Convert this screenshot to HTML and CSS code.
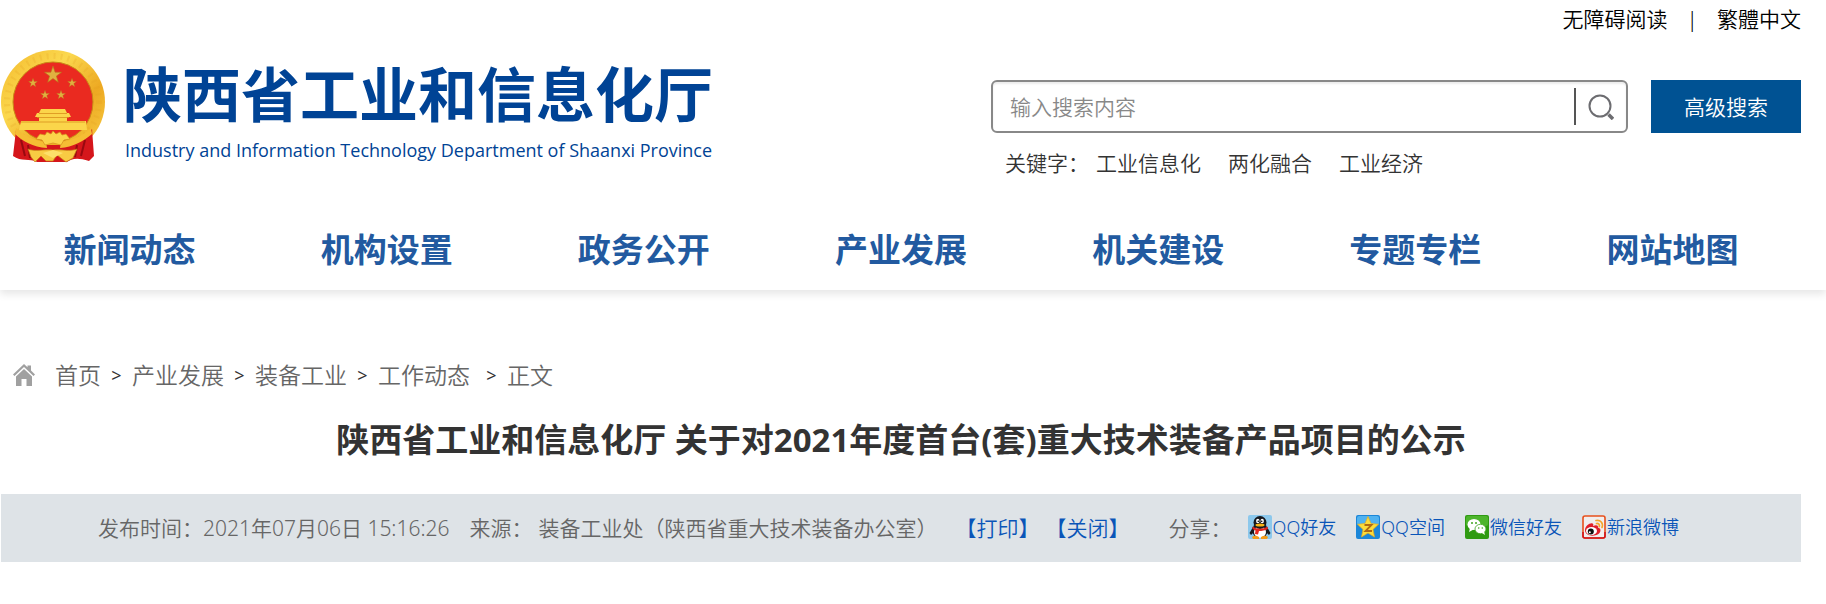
FILE: index.html
```html
<!DOCTYPE html>
<html lang="zh-CN">
<head>
  <meta charset="UTF-8">
  <meta name="viewport" content="width=device-width, initial-scale=1.0">
  <title>陕西省工业和信息化厅</title>
  <link rel="stylesheet" href="styles.css">
</head>
<body>

<header class="header">
  <div class="wrap">
    <div class="top-links">
      <a href="#">无障碍阅读</a>
      <span class="bar">|</span>
      <a href="#" lang="zh-TW">繁體中文</a>
    </div>

    <div class="head-main">
      <a class="logo" href="#">
        <svg class="emblem" viewBox="0 0 104 113" aria-hidden="true">
          <defs>
            <linearGradient id="gold" x1="0" y1="0" x2="1" y2="1">
              <stop offset="0" stop-color="#f3b92c"/>
              <stop offset="0.35" stop-color="#fbd84e"/>
              <stop offset="0.65" stop-color="#eda922"/>
              <stop offset="1" stop-color="#f8cf45"/>
            </linearGradient>
            <path id="star" d="M0-9 2.1-2.8 8.6-2.8 3.4 1.1 5.3 7.3 0 3.6-5.3 7.3-3.4 1.1-8.6-2.8-2.1-2.8Z"/>
          </defs>
          <circle cx="52" cy="52" r="52" fill="url(#gold)"/>
          <circle cx="52" cy="52" r="46" fill="none" stroke="#e39a1c" stroke-width="6" stroke-dasharray="2 5" opacity=".2"/>
          <circle cx="52" cy="52" r="40" fill="#ea2a20" stroke="#c98716"/>
          <g fill="#e0b040" stroke="#b5761a" stroke-width=".6">
            <use href="#star" x="52" y="25"/>
            <use href="#star" transform="translate(32 33) scale(.52)"/>
            <use href="#star" transform="translate(71 33) scale(.52)"/>
            <use href="#star" transform="translate(44 45) scale(.52)"/>
            <use href="#star" transform="translate(60 45) scale(.52)"/>
          </g>
          <path d="M40 59H64L66 63H38ZM36 63H68L70 67H34ZM38 67H66V71H85L86 80H18L20 71H38Z" fill="#fbd54a"/>
          <path d="M38 63.500H66M36 67.500H68M20 72H84" stroke="#d98f1c" stroke-width=".8"/>
          <path d="M15 80C24 88 34 93 42 95L62 95C70 93 84 87 91 79L93 106L88 111C76 107 70 109 66 112H36C29 108 20 112 12 106Z" fill="#d5161b"/>
          <path d="M20 90 24 106M27 95 29 108M84 90 80 106M76 95 74 107" stroke="#98090f" stroke-width="2" fill="none"/>
          <path d="M15 78C23 86 34 91 45 92L46 98C32 97 21 91 14 84ZM90 78C82 86 70 91 60 92L59 98C72 97 83 91 91 84Z" fill="#f5bd34"/>
          <path d="M35 89 39 84 44 85 46 82 50 84 52 81 55 84 59 82 61 85 65 84 69 89 63 90 60 95 52 93 44 95 41 90Z" fill="#fbd34a" stroke="#d58e1b" stroke-width=".7"/>
          <path d="M27 99C35 102 42 99 52 100C62 99 68 102 76 99L72 108 65 112 56 105 52 111 45 111 40 106 34 112 30 107Z" fill="#f8cb43" stroke="#c67916" stroke-width=".7"/>
          <path d="M42 103 52 100 62 103 52 108Z" fill="#fde06a"/>
        </svg>
        <span class="logo-text">
          <strong class="logo-cn">陕西省工业和信息化厅</strong>
          <span class="logo-en">Industry and Information Technology Department of Shaanxi Province</span>
        </span>
      </a>

      <div class="search">
        <form class="search-form">
          <div class="search-box">
            <input type="text" class="search-input" placeholder="输入搜索内容" aria-label="输入搜索内容">
            <button type="button" class="search-btn" aria-label="搜索">
              <svg width="26" height="26" viewBox="0 0 26 26" fill="none" stroke="#6c6c70">
                <circle cx="12" cy="12" r="10.500" stroke-width="2"/>
                <path d="M20.500 20.500 25 25" stroke-width="3.500"/>
              </svg>
            </button>
          </div>
          <button type="button" class="adv-btn">高级搜索</button>
        </form>
        <div class="keywords">
          <span>关键字：</span>
          <a href="#">工业信息化</a>
          <a href="#">两化融合</a>
          <a href="#">工业经济</a>
        </div>
      </div>
    </div>

    <nav class="nav">
      <a href="#">新闻动态</a>
      <a href="#">机构设置</a>
      <a href="#">政务公开</a>
      <a href="#">产业发展</a>
      <a href="#">机关建设</a>
      <a href="#">专题专栏</a>
      <a href="#">网站地图</a>
    </nav>
  </div>
</header>

<main class="wrap">
  <div class="crumbs">
    <svg class="home" width="22" height="22" viewBox="0 0 22 22" fill="#a0a0a0" aria-hidden="true">
      <path d="M11 0 14.500 3.300V1.500H18V6.500L22 10.500 20.500 12 11 3 1.500 12 0 10.500Z"/>
      <path d="M11 5 19 12.500V22H13.500V15H8.500V22H3V12.500Z"/>
    </svg>
    <a href="#">首页</a>
    <i>&gt;</i>
    <a href="#">产业发展</a>
    <i>&gt;</i>
    <a href="#">装备工业</a>
    <i>&gt;</i>
    <a href="#">工作动态</a>
    <i class="last">&gt;</i>
    <span>正文</span>
  </div>

  <h1 class="title">陕西省工业和信息化厅 关于对2021年度首台(套)重大技术装备产品项目的公示</h1>

  <div class="meta">
    <span class="time">发布时间：2021年07月06日 15:16:26</span>
    <span class="from">来源：</span>
    <span class="office">装备工业处（陕西省重大技术装备办公室）</span>
    <span class="tools">
      <a href="#">【打印】</a>
      <a href="#">【关闭】</a>
    </span>
    <span class="share-label">分享：</span>
    <div class="share">
      <a href="#">
        <svg width="24" height="24" viewBox="0 0 24 24" aria-hidden="true">
          <rect width="24" height="24" rx="2" fill="#8cc8ec"/>
          <path d="M5 12 1.500 18 3 20 6 17ZM19 12 22.500 18 21 20 18 17Z" fill="#15171c"/>
          <ellipse cx="12" cy="15.500" rx="8" ry="7.500" fill="#15171c"/>
          <ellipse cx="12" cy="17" rx="6" ry="6" fill="#fff"/>
          <ellipse cx="12" cy="7.500" rx="6.500" ry="6.500" fill="#15171c"/>
          <ellipse cx="9.800" cy="6" rx="1.700" ry="2.300" fill="#fff"/>
          <ellipse cx="14.200" cy="6" rx="1.700" ry="2.300" fill="#fff"/>
          <circle cx="10.300" cy="6.200" r=".8"/>
          <circle cx="13.700" cy="6.200" r=".8"/>
          <ellipse cx="12" cy="10" rx="4.500" ry="1.500" fill="#f8b414"/>
          <path d="M4.500 11.500C9 14.500 15 14.500 19.500 11.500L20 14C17 15.500 14 16 11 16L10 19.500 7 19 7.500 15.500 4.500 14Z" fill="#e3271f"/>
          <path d="M4 22Q7 19.500 11 22V24H5ZM20 22Q17 19.500 13 22V24H19Z" fill="#f39a18"/>
        </svg><span>QQ好友</span>
      </a>
      <a href="#">
        <svg width="24" height="24" viewBox="0 0 24 24" aria-hidden="true">
          <rect width="24" height="24" rx="2" fill="#1b86d8"/>
          <rect x="1" y="1" width="22" height="9" rx="2" fill="#4fb2f0"/>
          <path d="M12 1.500 15 8.500 22.500 9.300 17 14.400 18.500 22 12 18 5.500 22 7 14.400 1.500 9.300 9 8.500Z" fill="#fbdc3a" stroke="#e8ac1c" stroke-width=".7" stroke-linejoin="round"/>
          <path d="M8.500 10H15.500L9.500 16H16" fill="none" stroke="#b06a14" stroke-width="1.800"/>
        </svg><span>QQ空间</span>
      </a>
      <a href="#">
        <svg width="24" height="24" viewBox="0 0 24 24" aria-hidden="true">
          <rect width="24" height="24" rx="2" fill="#2f9a12"/>
          <rect x="1" y="1" width="22" height="10" rx="2" fill="#4db52c"/>
          <ellipse cx="9" cy="9.500" rx="6.500" ry="5.500" fill="#fff"/>
          <path d="M5 13 4 17 8.500 14.500Z" fill="#fff"/>
          <ellipse cx="15.500" cy="14" rx="5.500" ry="4.700" fill="#fff" stroke="#3fa61f" stroke-width=".8"/>
          <path d="M17 18 20 20 19 16.500Z" fill="#fff"/>
          <g fill="#3fa61f">
            <circle cx="7" cy="8" r="1"/>
            <circle cx="11" cy="8" r="1"/>
            <circle cx="13.700" cy="13" r=".8"/>
            <circle cx="17.300" cy="13" r=".8"/>
          </g>
        </svg><span>微信好友</span>
      </a>
      <a href="#">
        <svg width="24" height="24" viewBox="0 0 24 24" aria-hidden="true">
          <rect x="1" y="1" width="22" height="22" rx="2" fill="#f1eeee" stroke="#e8501c" stroke-width="1.600"/>
          <path d="M1 17V21Q1 23 3 23H21Q23 23 23 21V17" fill="none" stroke="#d2141c" stroke-width="1.600"/>
          <path d="M3 15C3 11 8 7.500 10.500 8.500C12 9 11 11 11 11C14 9.500 16.500 10 16 12.500C19 13.300 19 16 17.500 18C14 22 3 22 3 15Z" fill="#e0202a"/>
          <ellipse cx="9.500" cy="16" rx="5.500" ry="4" fill="#fff"/>
          <circle cx="8.800" cy="16.500" r="3" fill="#111"/>
          <circle cx="7.800" cy="17.200" r="1" fill="#fff"/>
          <path d="M14 5.500C18.500 4.500 21.500 8 20 12.500M14.500 8.500C16.500 8.200 18 9.500 17.300 11.500" fill="none" stroke="#f6a52a" stroke-width="1.700" stroke-linecap="round"/>
        </svg><span>新浪微博</span>
      </a>
    </div>
  </div>
</main>

</body>
</html>
```
FILE: styles.css
```css
* { box-sizing: border-box; }
body {
  margin: 0;
  background: #fff;
  color: #333;
  font-family: "Noto Sans", "Noto Sans CJK SC", sans-serif;
  font-size: 21px;
  font-weight: 350;
  line-height: 30px;
}
a {
  color: inherit;
  text-decoration: none;
}
svg { display: block; flex: none; }
button, input {
  font: inherit;
  border: none;
  padding: 0;
}
.wrap {
  padding: 0 25px 0 1px;
}

/* header */
.header {
  box-shadow: 0 4px 8px rgba(0,0,0,0.1);
}
.top-links {
  display: flex;
  justify-content: flex-end;
  gap: 19px;
  padding-top: 4px;
  color: #000;
}
.head-main {
  display: flex;
  justify-content: space-between;
  height: 174px;
}
.logo {
  display: flex;
  gap: 18px;
  padding-top: 16px;
  color: #004395;
}
.emblem {
  width: 104px;
  height: 113px;
}
.logo-text {
  display: flex;
  flex-direction: column;
  padding-top: 10px;
}
.logo-cn {
  font-size: 59px;
  font-weight: 700;
  line-height: 68px;
}
.logo-en {
  padding-left: 2px;
  font-family: "Open Sans", sans-serif;
  font-size: 18px;
  font-weight: 400;
  line-height: 44px;
}
.search {
  width: 45%;
  padding-top: 46px;
}
.search-form {
  display: flex;
  gap: 23px;
}
.search-box {
  display: flex;
  flex: 1;
  align-items: center;
  height: 53px;
  border: 2px solid #888;
  border-radius: 6px;
  box-shadow: inset 0 2px 2px rgba(0,0,0,0.08);
}
.search-input {
  flex: 1;
  min-width: 0;
  padding-left: 17px;
  background: none;
  outline: none;
}
.search-input::placeholder { color: #888; }
.search-btn {
  display: flex;
  align-items: center;
  justify-content: center;
  width: 52px;
  height: 37px;
  border-left: 2px solid #555;
  background: none;
  cursor: pointer;
}
.adv-btn {
  width: 150px;
  background: #005293;
  color: #fff;
  cursor: pointer;
}
.keywords {
  display: flex;
  gap: 27px;
  padding: 15px 0 0 14px;
}
.keywords span { margin-right: -20px; }

.nav {
  display: grid;
  grid-template-columns: repeat(7, 1fr);
  height: 82px;
  line-height: 84px;
  font-size: 33px;
  font-weight: 700;
  text-align: center;
  color: #225aa0;
}

/* article head */
.crumbs {
  display: flex;
  align-items: center;
  padding: 70px 0 0 12px;
  font-size: 23px;
  color: #666;
}
.home { margin-right: 20px; }
.crumbs i {
  width: 31px;
  font-size: 18px;
  font-style: normal;
  font-weight: 400;
  text-align: center;
  color: #333;
}
.crumbs .last {
  width: 37px;
  padding-left: 6px;
}
.title {
  margin: 28px 0 32px;
  font-size: 33px;
  font-weight: 700;
  line-height: 44px;
  text-align: center;
  color: #333;
}
.meta {
  display: flex;
  align-items: center;
  height: 68px;
  padding-left: 97px;
  background: #dee3e7;
  color: #666;
  white-space: nowrap;
}
.from { margin-left: 20px; }
.office { margin-left: 6px; }
.tools {
  display: flex;
  gap: 6px;
  margin-left: 18px;
  color: #0a55b8;
}
.share-label { margin-left: 39px; }
.share {
  display: flex;
  gap: 20px;
  margin-left: 16px;
  padding-bottom: 3px;
  font-size: 18px;
  color: #0a55b8;
}
.share a {
  display: flex;
  align-items: center;
  gap: 1px;
}
```
